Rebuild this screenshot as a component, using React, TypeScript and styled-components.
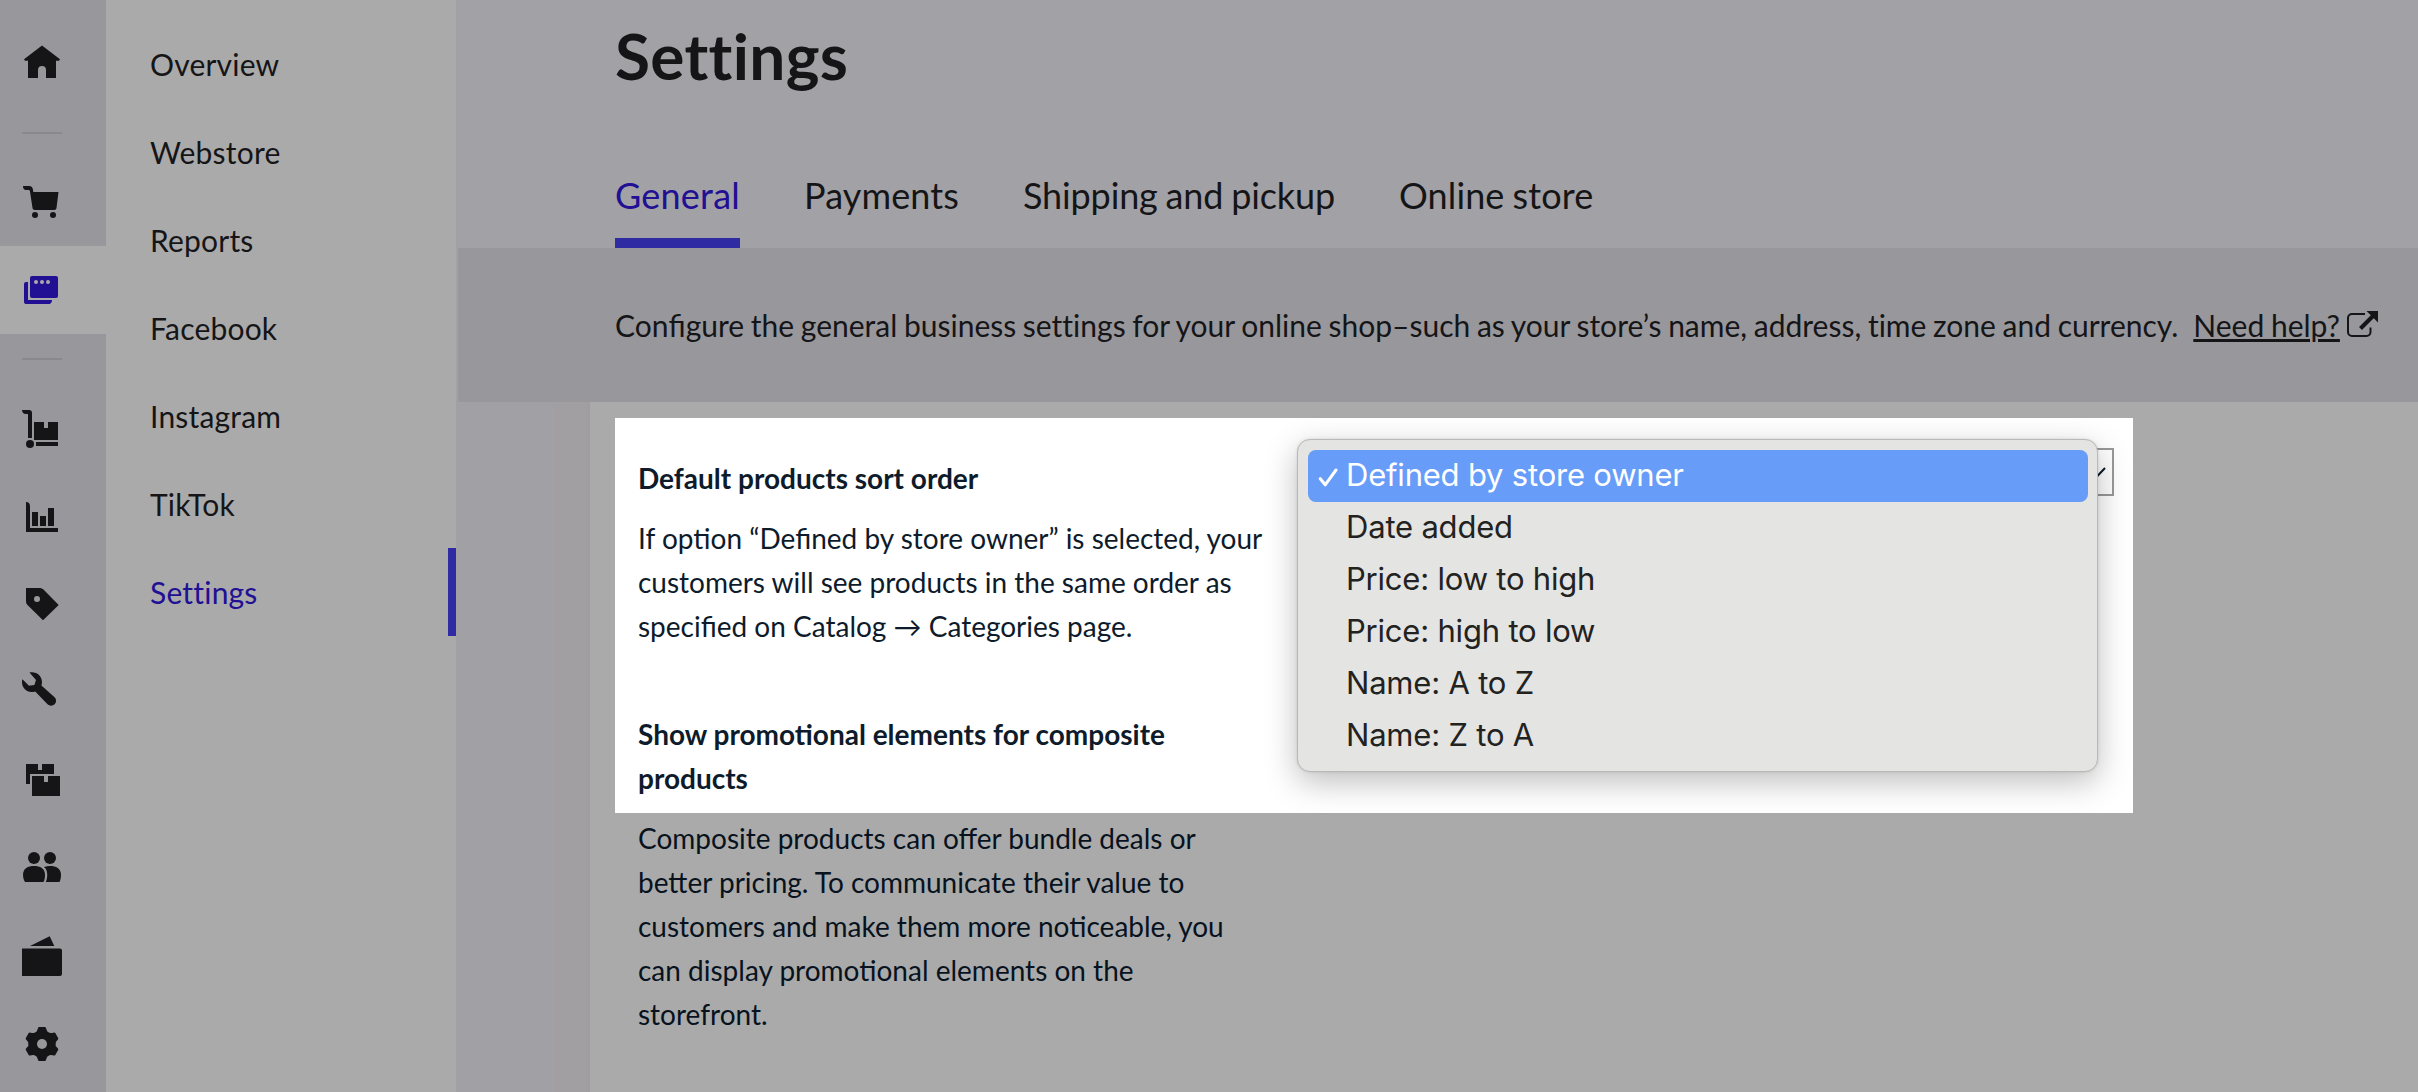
import React from "react";
import styled, { createGlobalStyle } from "styled-components";

const GlobalStyle = createGlobalStyle`
  html, body, #root { margin: 0; padding: 0; }
  *, *::before, *::after { box-sizing: border-box; }
  body {
    width: 2418px; height: 1092px; overflow: hidden;
    font-family: Lato, "Open Sans", sans-serif;
    color: #151517; background: #aaaaaa;
  }
`;

const Page = styled.div`display: flex; width: 2418px; height: 1092px; overflow: hidden;`;

const Rail = styled.nav`
  flex: none; width: 106px; height: 1092px; padding-top: 18px;
  display: flex; flex-direction: column; background: #98979b; color: #151517;
`;
const RailItem = styled.a<{ $active?: boolean }>`
  flex: none; height: 88px; padding-left: 22px; display: flex; align-items: center;
  background: ${p => (p.$active ? "#aaaaaa" : "transparent")};
  color: ${p => (p.$active ? "#210f94" : "inherit")};
`;
const RailRule = styled.div<{ $top?: number }>`
  flex: none; width: 40px; height: 2px; margin: ${p => p.$top ?? 24}px 0 24px 22px; background: #89888c;
`;
const Glyph = styled.svg`width: 40px; height: 40px; display: block; fill: currentColor; overflow: visible;`;

const Menu = styled.nav`
  flex: none; width: 352px; height: 1092px; padding-top: 20px;
  background: #aaaaaa; border-right: 2px solid #a1a0a4;
`;
const MenuItem = styled.a<{ $active?: boolean }>`
  display: block; height: 88px; padding-left: 44px; line-height: 88px; font-size: 30px;
  letter-spacing: 0.2px; font-variant-ligatures: none; white-space: nowrap;
  color: ${p => (p.$active ? "#210f94" : "#151517")};
  border-right: 8px solid ${p => (p.$active ? "#2e2ba3" : "transparent")};
`;

const Main = styled.main`flex: 1; min-width: 0; display: flex; flex-direction: column;`;
const Header = styled.header`
  flex: none; height: 248px; padding-left: 157px; background: #a2a1a5;
  display: flex; flex-direction: column; justify-content: space-between;
`;
const Title = styled.h1`
  margin: 16px 0 0; font-size: 64px; line-height: 80px; font-weight: 700; letter-spacing: 0.3px;
  font-variant-ligatures: none;
`;
const Tabs = styled.div`display: flex; gap: 64px; height: 88px;`;
const Tab = styled.a<{ $active?: boolean; $tracking: number }>`
  height: 88px; line-height: 71px; font-size: 36px; white-space: nowrap;
  letter-spacing: ${p => p.$tracking}px; word-spacing: -1.2px;
  color: ${p => (p.$active ? "#210f94" : "#151517")};
  border-bottom: ${p => (p.$active ? "10px solid #2e2ba3" : "none")};
`;
const InfoBar = styled.div`
  flex: none; height: 154px; padding-left: 157px; display: flex; align-items: center;
  background: #98979c; font-size: 30px; line-height: 36px; white-space: nowrap;
  font-variant-ligatures: none; word-spacing: -1.02px;
`;
const Ligature = styled.span`font-variant-ligatures: common-ligatures;`;
const HelpLink = styled.a`
  margin-left: 15px; text-decoration: underline; text-decoration-thickness: 3px; text-underline-offset: 2px;
`;
const ExternalIcon = styled.svg`width: 32px; height: 27px; margin: -1px 0 0 7px; fill: none;`;

const Body = styled.div`flex: 1; min-height: 0; display: flex;`;
const Gutter = styled.div`
  flex: none; width: 132px;
  background: linear-gradient(90deg, #a1a0a5 0 96px, #a29fa2 96px 129px, #9e9ea1 129px 132px);
`;
const Content = styled.section`
  flex: 1; padding: 16px 0 0 25px; background: #aaaaaa;
  color: #07121e; font-size: 28px; line-height: 44px;
`;
const Spotlight = styled.div`
  width: 1518px; height: 395px; padding: 38px 19px 0 23px; display: flex; justify-content: space-between;
  background: #ffffff; color: #0e1b2b;
`;
const Column = styled.div`width: 632px;`;
const SettingName = styled.h2<{ $gap?: number }>`
  margin: ${p => p.$gap ?? 0}px 0 0; font-size: 28px; line-height: 44px; font-weight: 700;
`;
const Text = styled.p`margin: 16px 0 0; width: 632px;`;
const DimText = styled(Text)`margin: 3px 0 0 23px;`;

const SelectWrap = styled.div`position: relative; width: 800px; height: 48px; margin-top: -8px;`;
const SelectBox = styled.div`
  height: 48px; border: 2px solid #999999; display: flex; align-items: center; justify-content: flex-end;
  padding-right: 6px;
`;
const Chevron = styled.svg`width: 18px; height: 11px; fill: none; stroke: #0e1b2b; stroke-width: 2;`;
const Popup = styled.ul`
  position: absolute; left: -17px; top: -9px; width: 801px; height: 333px; margin: 0; padding: 10px 9px 0 10px;
  list-style: none; background: #e4e4e2; border: 1px solid #b9b9b8; border-radius: 13px;
  box-shadow: 0 10px 32px rgba(0, 0, 0, 0.26), 0 0 3px rgba(0, 0, 0, 0.12);
  font-family: Inter, "Liberation Sans", sans-serif; color: #222221;
`;
const Option = styled.li<{ $selected?: boolean }>`
  height: 52px; padding-left: 10px; display: flex; align-items: flex-start;
  font-size: 31px; line-height: 49px; letter-spacing: -0.2px; white-space: nowrap; border-radius: 8px;
  background: ${p => (p.$selected ? "#679cf9" : "transparent")};
  color: ${p => (p.$selected ? "#ffffff" : "inherit")};
`;
const Mark = styled.svg`
  flex: none; width: 20px; height: 20px; margin: 17px 8px 0 0; fill: none;
  stroke: currentColor; stroke-width: 3; stroke-linecap: round; stroke-linejoin: round;
`;

const tooth = "M16 3.9 Q16.3 3 17.2 3 H22.8 Q23.7 3 24 3.9 Q24.8 8 27.5 9 V14 H12.5 V9 Q15.2 8 16 3.9z";

const icons: Record<string, React.ReactNode> = {
  home: <path d="M20 3.5 38 17.3 37 18.8H34V36H24V28a4 4 0 0 0-8 0V36H6V18.8H3L2 17.3z" />,
  cart: (
    <>
      <path d="M1 4H7C9.5 4 10.8 5.5 11 8L11.3 10H36.5L34.5 26C34.3 27.3 33.5 28 32.5 28H13C11.5 28 10.6 27.3 10.5 26L8 9.5C7.8 8.5 7.5 8 6.5 8H4C2 8 1 6.5 1 4z" />
      <circle cx="13" cy="33" r="3" /><circle cx="31" cy="33" r="3" />
    </>
  ),
  store: (
    <>
      <path d="M6 12V30H30A4 4 0 0 1 28 34H4A2 2 0 0 1 2 32V14A2 2 0 0 1 4 12z" />
      <rect x="8" y="6" width="28" height="22" rx="2" />
      <g fill="#aaaaaa"><circle cx="14" cy="12" r="2" /><circle cx="20" cy="12" r="2" /><circle cx="26" cy="12" r="2" /></g>
    </>
  ),
  dolly: (
    <>
      <path d="M0 2H7a3 3 0 0 1 3 3V30H6V6H4C1.5 6 .3 4.5 0 2z" />
      <circle cx="8" cy="36" r="4" />
      <path d="M14 34H36V38H14zM12 14H22V20H26V14H36V32H12z" />
    </>
  ),
  chart: <path d="M4 6C6.5 6 8 7.5 8 10V32H36V36H4zM10 16h6v14h-6zM18 20h6v10h-6zM26 12h6v18h-6z" />,
  tag: <path fillRule="evenodd" d="M4 4H17C19 4 20.5 4.5 22 6L36.7 21 21 36.3 6 21.5C4.5 20 4 19 4 17zM15 12a3 3 0 1 0 0 6a3 3 0 1 0 0-6z" />,
  wrench: <path d="M7.5.5C14-1 20 3.5 20 10 20 11.2 19.8 12.3 19.4 13.4L32.6 25.2A5 5 0 0 1 25.5 32.3L13.2 19.4C12 19.8 10.8 20 9.5 20 4 20 0 15.5 0 10 0 9 .1 8 .4 7.3L7 13.7 12.4 13 14 8z" />,
  boxes: <path d="M4 4H16V10H20V4H32V14H8V24H4zM10 16H22V22H26V16H38V36H10z" />,
  people: (
    <>
      <circle cx="12" cy="10" r="6" /><circle cx="28" cy="10" r="6" />
      <path d="M3 34C1.8 32 1 30 1 26.5 1 20.5 6 18 12 18S23 20.5 23 26.5C23 30 22.5 32 21.5 34z" />
      <path d="M22 19C24 18.2 26 18 28 18 34 18 39 20.5 39 26.5 39 30 38.5 32 37.5 34H23.8C25 31 25.3 29 25.2 26.5 25.1 23 24.5 21 22 19z" />
    </>
  ),
  wallet: <path d="M8 10 27.7.3 32.3 10zM0 12.5H38a2 2 0 0 1 2 2V38a2 2 0 0 1-2 2H0z" />,
  gear: (
    <>
      {[0, 60, 120, 180, 240, 300].map(a => <path key={a} d={tooth} transform={`rotate(${a} 20 20)`} />)}
      <circle cx="20" cy="20" r="12" />
      <circle cx="20" cy="20" r="5" fill="#98979b" />
    </>
  ),
};

const railLower = ["dolly", "chart", "tag", "wrench", "boxes", "people", "wallet", "gear"];
const menu = ["Overview", "Webstore", "Reports", "Facebook", "Instagram", "TikTok", "Settings"];
const tabs = [
  { label: "General", tracking: 0.23 },
  { label: "Payments", tracking: 0.12 },
  { label: "Shipping and pickup", tracking: -0.13 },
  { label: "Online store", tracking: 0.12 },
];
const options = [
  "Defined by store owner", "Date added", "Price: low to high",
  "Price: high to low", "Name: A to Z", "Name: Z to A",
];

const RailIcon = ({ name, active }: { name: string; active?: boolean }) => (
  <RailItem $active={active}><Glyph viewBox="0 0 40 40">{icons[name]}</Glyph></RailItem>
);

export default function App() {
  return (
    <>
      <GlobalStyle />
      <Page>
        <Rail>
          <RailIcon name="home" />
          <RailRule $top={26} />
          <RailIcon name="cart" />
          <RailIcon name="store" active />
          <RailRule />
          {railLower.map(n => <RailIcon key={n} name={n} />)}
        </Rail>
        <Menu>
          {menu.map(m => <MenuItem key={m} $active={m === "Settings"}>{m}</MenuItem>)}
        </Menu>
        <Main>
          <Header>
            <Title>Settings</Title>
            <Tabs>
              {tabs.map(t => (
                <Tab key={t.label} $active={t.label === "General"} $tracking={t.tracking}>{t.label}</Tab>
              ))}
            </Tabs>
          </Header>
          <InfoBar>
            <span>
              Con<Ligature>fi</Ligature>gure the general business settings for your online shop–such as your
              store’s name, address, time zone and currency.
            </span>
            <HelpLink>Need help?</HelpLink>
            <ExternalIcon viewBox="0 0 32 27">
              <path d="M18 3H5a4 4 0 0 0-4 4V21a4 4 0 0 0 4 4H19.5a4 4 0 0 0 4-4V16.5" stroke="#151517" strokeWidth="2" />
              <path d="M13.5 17.5 26 5" stroke="#151517" strokeWidth="4" />
              <path d="M19.5 0H31V11.5z" fill="#151517" />
            </ExternalIcon>
          </InfoBar>
          <Body>
            <Gutter />
            <Content>
              <Spotlight>
                <Column>
                  <SettingName>Default products sort order</SettingName>
                  <Text>
                    If option “Defined by store owner” is selected, your customers will see products in the
                    same order as specified on Catalog → Categories page.
                  </Text>
                  <SettingName $gap={64}>Show promotional elements for composite products</SettingName>
                </Column>
                <SelectWrap>
                  <SelectBox><Chevron viewBox="0 0 18 11"><path d="M1 1 9 9.5 17 1" /></Chevron></SelectBox>
                  <Popup>
                    {options.map((o, i) => (
                      <Option key={o} $selected={i === 0}>
                        <Mark viewBox="0 0 20 20">{i === 0 && <path d="M2.3 11.7 7.2 17.8 18 3" />}</Mark>
                        {o}
                      </Option>
                    ))}
                  </Popup>
                </SelectWrap>
              </Spotlight>
              <DimText>
                Composite products can offer bundle deals or better pricing. To communicate their value to
                customers and make them more noticeable, you can display promotional elements on the storefront.
              </DimText>
            </Content>
          </Body>
        </Main>
      </Page>
    </>
  );
}
